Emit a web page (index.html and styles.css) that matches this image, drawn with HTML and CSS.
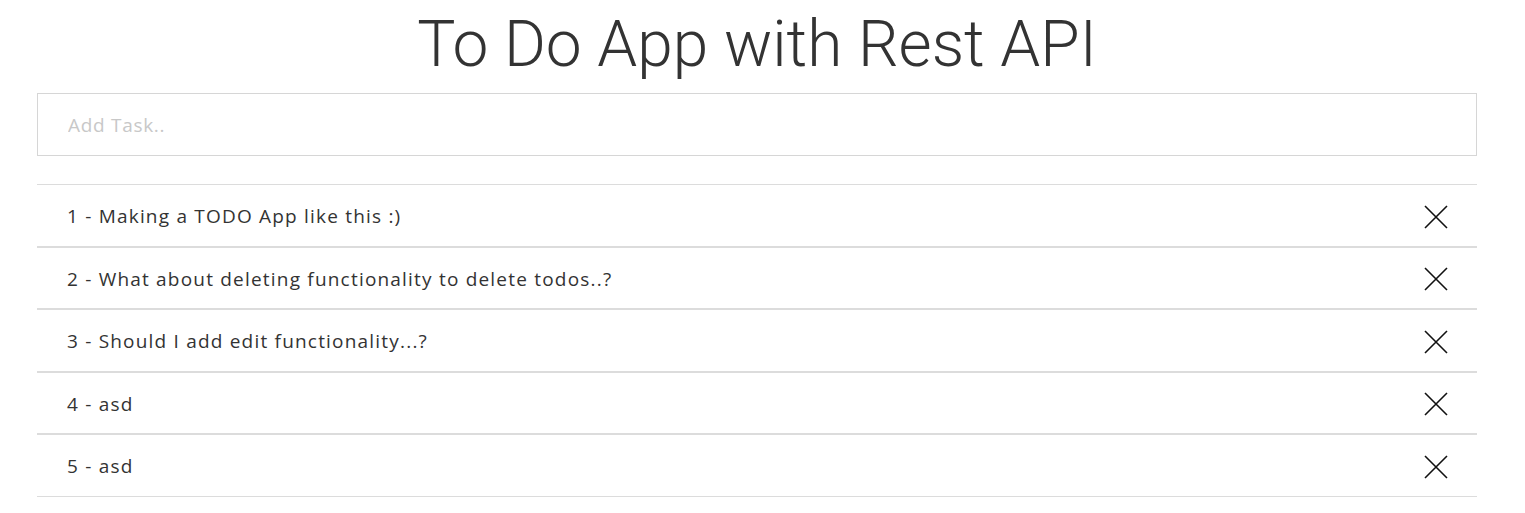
FILE: index.html
```html
<!DOCTYPE html>
<html lang="en">
<head>
<meta charset="utf-8">
<title>To Do App with Rest API</title>
<link rel="stylesheet" href="styles.css">
</head>
<body>
<main class="app">
  <h1 class="title">To Do App with Rest API</h1>
  <form class="add-form">
    <input class="add-input" type="text" placeholder="Add Task..">
  </form>
  <ul class="todo-list">
    <li class="todo-item"><span class="todo-text">1 - Making a TODO App like this :)</span><button class="delete" type="button" aria-label="Delete"><svg viewBox="0 0 24 24" width="24" height="24"><path d="M1 1 L23 23 M23 1 L1 23" stroke="#111" stroke-width="1.6" fill="none"/></svg></button></li>
    <li class="todo-item"><span class="todo-text">2 - What about deleting functionality to delete todos..?</span><button class="delete" type="button" aria-label="Delete"><svg viewBox="0 0 24 24" width="24" height="24"><path d="M1 1 L23 23 M23 1 L1 23" stroke="#111" stroke-width="1.6" fill="none"/></svg></button></li>
    <li class="todo-item"><span class="todo-text">3 - Should I add edit functionality...?</span><button class="delete" type="button" aria-label="Delete"><svg viewBox="0 0 24 24" width="24" height="24"><path d="M1 1 L23 23 M23 1 L1 23" stroke="#111" stroke-width="1.6" fill="none"/></svg></button></li>
    <li class="todo-item"><span class="todo-text">4 - asd</span><button class="delete" type="button" aria-label="Delete"><svg viewBox="0 0 24 24" width="24" height="24"><path d="M1 1 L23 23 M23 1 L1 23" stroke="#111" stroke-width="1.6" fill="none"/></svg></button></li>
    <li class="todo-item"><span class="todo-text">5 - asd</span><button class="delete" type="button" aria-label="Delete"><svg viewBox="0 0 24 24" width="24" height="24"><path d="M1 1 L23 23 M23 1 L1 23" stroke="#111" stroke-width="1.6" fill="none"/></svg></button></li>
  </ul>
</main>
</body>
</html>
```
FILE: styles.css
```css
* { box-sizing: border-box; }
html, body { margin: 0; padding: 0; background: #fff; }
body { font-family: "Open Sans", sans-serif; color: #333; }
.app { width: 1440px; margin-left: 37px; }
.title {
  margin: 3px 0 6px;
  font-family: Roboto, sans-serif;
  font-weight: 300;
  font-size: 64px;
  line-height: 84px;
  text-align: center;
  color: #333;
}
.add-form { margin: 0 0 28px; }
.add-input {
  display: block;
  width: 100%;
  height: 63px;
  border: 1px solid #d6d6d6;
  padding: 0 30px;
  font-family: "Open Sans", sans-serif;
  font-size: 19px;
  letter-spacing: 0.7px;
  color: #333;
  outline: none;
}
.add-input::placeholder { color: #c8c8c8; }
.todo-list { list-style: none; margin: 0; padding: 0; }
.todo-item {
  display: flex;
  align-items: center;
  justify-content: space-between;
  height: 62.5px;
  padding: 0 29px 0 30px;
  border-top: 1px solid #dcdcdc;
  border-bottom: 1px solid #dcdcdc;
}
.todo-text { font-size: 19px; color: #333; letter-spacing: 1.2px; padding-top: 2px; }
.delete {
  border: 0;
  background: none;
  padding: 0;
  margin-top: 3px;
  width: 24px;
  height: 24px;
  cursor: pointer;
  display: flex;
}
```
